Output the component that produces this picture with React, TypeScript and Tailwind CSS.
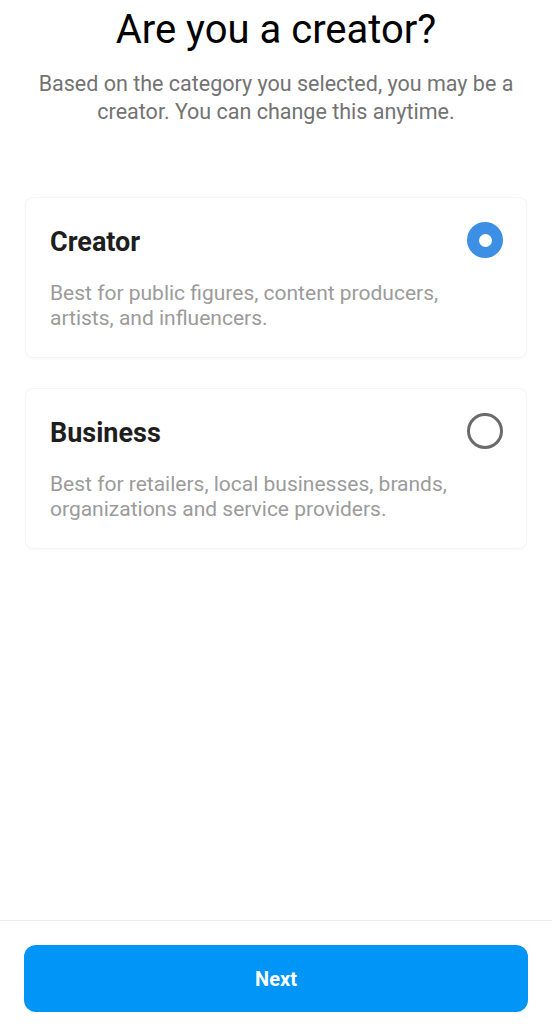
import React, { useState } from 'react';

type Option = {
  id: string;
  title: string;
  description: string;
};

const options: Option[] = [
  {
    id: 'creator',
    title: 'Creator',
    description: 'Best for public figures, content producers, artists, and influencers.',
  },
  {
    id: 'business',
    title: 'Business',
    description: 'Best for retailers, local businesses, brands, organizations and service providers.',
  },
];

const Radio: React.FC<{ checked: boolean }> = ({ checked }) =>
  checked ? (
    <div className="w-[36px] h-[36px] rounded-full bg-[#3d8fe6] flex items-center justify-center shrink-0">
      <div className="w-[13px] h-[13px] rounded-full bg-white" />
    </div>
  ) : (
    <div className="w-[36px] h-[36px] rounded-full border-[3px] border-[#6b6b6b] shrink-0" />
  );

export default function App() {
  const [selected, setSelected] = useState('creator');

  return (
    <div
      className="w-[552px] h-[1024px] bg-white flex flex-col"
      style={{ fontFamily: 'Roboto, "Liberation Sans", sans-serif' }}
    >
      <div className="flex-1 px-[25px]">
        <h1 className="text-center text-[40px] leading-[48px] text-black pt-[6px]">
          Are you a creator?
        </h1>
        <p className="text-center text-[21.5px] leading-[28px] text-[#737373] mt-[16px]">
          Based on the category you selected, you may be a creator. You can change this anytime.
        </p>

        <div className="mt-[71px] flex flex-col gap-[30px]">
          {options.map((opt) => (
            <div
              key={opt.id}
              role="radio"
              aria-checked={selected === opt.id}
              onClick={() => setSelected(opt.id)}
              className="w-full cursor-pointer rounded-[8px] border border-[#f4f4f4] shadow-[0_1px_3px_rgba(0,0,0,0.03)] pl-[24px] pr-[23px] pt-[26px] h-[161px]"
            >
              <div className="flex items-center justify-between h-[36px]">
                <span className="text-[27px] leading-[36px] font-bold text-[#1e1e1e]">
                  {opt.title}
                </span>
                <div className="-mt-[4px]">
                  <Radio checked={selected === opt.id} />
                </div>
              </div>
              <p className="text-[21px] leading-[25px] text-[#9b9b9b] mt-[21px] pr-[50px]">
                {opt.description}
              </p>
            </div>
          ))}
        </div>
      </div>

      <div className="border-t border-[#ececec] px-[24px] pt-[24px] pb-[12px]">
        <button className="w-full h-[67px] rounded-[12px] bg-[#0095f6] text-white text-[20px] font-bold">
          Next
        </button>
      </div>
    </div>
  );
}
